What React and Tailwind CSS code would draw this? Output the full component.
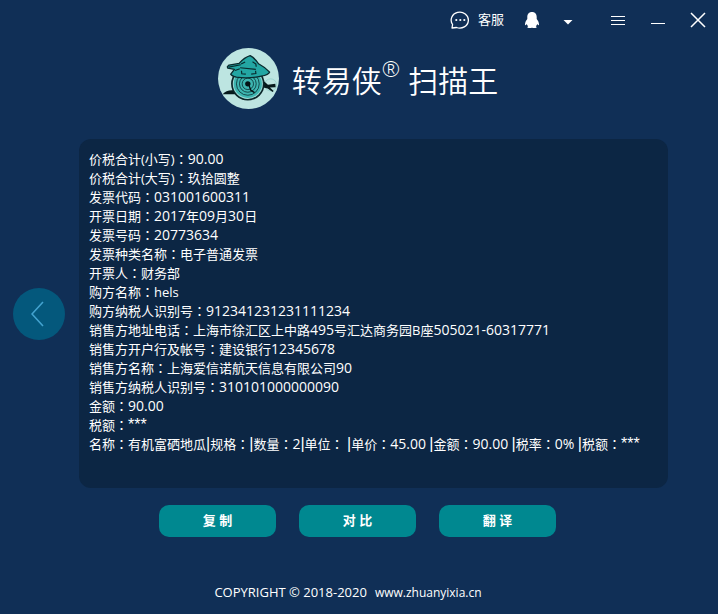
const receiptLines = [
  "价税合计(小写)：90.00",
  "价税合计(大写)：玖拾圆整",
  "发票代码：031001600311",
  "开票日期：2017年09月30日",
  "发票号码：20773634",
  "发票种类名称：电子普通发票",
  "开票人：财务部",
  "购方名称：hels",
  "购方纳税人识别号：912341231231111234",
  "销售方地址电话：上海市徐汇区上中路495号汇达商务园B座505021-60317771",
  "销售方开户行及帐号：建设银行12345678",
  "销售方名称：上海爱信诺航天信息有限公司90",
  "销售方纳税人识别号：310101000000090",
  "金额：90.00",
  "税额：***",
  "名称：有机富硒地瓜|规格：|数量：2|单位： |单价：45.00 |金额：90.00 |税率：0% |税额：***",
];

const actions = ["复 制", "对 比", "翻 译"];

// Digits are set a step larger, full-width colons use the centred form,
// bars and asterisks come from a narrower face
const ReceiptLine = ({ text }) => (
  <p>
    {text.split(/([0-9.%-]+|：|[|*]+)/).map((part, i) => {
      if (i % 2 === 0) return part;
      if (part === "：")
        return (
          <span key={i} className="leading-none font-['Noto_Sans_CJK_TC',sans-serif]">
            {part}
          </span>
        );
      if (/[|*]/.test(part))
        return (
          <span key={i} className="text-[16px] leading-none font-['Liberation_Sans',sans-serif]">
            {part}
          </span>
        );
      return (
        <span key={i} className="text-[14px] leading-none">
          {part}
        </span>
      );
    })}
  </p>
);

const Logo = () => (
  <svg viewBox="25 20 182 182" className="size-[61px]" aria-hidden="true">
    <circle cx="116" cy="111" r="91" fill="#bde5e1" />
    <circle cx="182" cy="130" r="18" fill="none" stroke="#8fcfc9" strokeWidth="2" />
    <path d="M39 158 Q50 144 72 146 L80 158 Z" fill="#071a1c" />
    <path d="M158 123 L164 121 L174 130 L196 127 L197 137 L180 138 L191 148 L188 151 L173 141 L157 137 Z" fill="#071a1c" />
    <circle cx="114" cy="127" r="50" fill="#0b2528" />
    <circle cx="114" cy="127" r="45" fill="#9bd8d3" />
    <circle cx="114" cy="127" r="42" fill="#3db5b0" />
    <g fill="none" stroke="#0c3437" strokeWidth="2.5">
      <circle cx="114" cy="127" r="34" />
      <circle cx="114" cy="127" r="25" />
      <circle cx="114" cy="127" r="17" />
    </g>
    <circle cx="114" cy="127" r="8" fill="#041214" />
    <path d="M117 130 L123 146 L134 153" fill="none" stroke="#041214" strokeWidth="4" />
    <path
      d="M53 76 L58 71 L88 66 Q104 48 121 43 Q135 50 146 67 Q165 77 179 92 Q176 100 154 104 Q116 112 80 107 Q66 104 63 98 L74 84 L54 80 Z"
      fill="#23a6a3"
      stroke="#092a2d"
      strokeWidth="4"
      strokeLinejoin="round"
    />
    <path
      d="M57 77 L93 70 M94 68 L106 62 M128 61 L138 68 L139 76 M91 79 L138 84 M95 88 L96 97 L108 98 M124 98 L138 96 L137 88 M76 87 L90 82"
      fill="none"
      stroke="#092a2d"
      strokeWidth="3.5"
    />
  </svg>
);

const App = () => {
  return (
    <div className="min-h-screen bg-[#102f56] text-white font-['Open_Sans','Noto_Sans_CJK_SC',sans-serif]">
      <header className="flex items-center justify-end h-10 pr-3">
        <button className="flex items-center gap-2 mr-5 text-[13px]">
          <svg viewBox="0 0 20 20" className="size-5" fill="none" stroke="currentColor" strokeWidth="1.3">
            <path d="M2 18 L2.6 14.5 A8.6 8 0 1 1 6.5 17.5 Z" strokeLinejoin="round" />
            <g fill="currentColor" stroke="none">
              <circle cx="6.3" cy="10" r="1.1" />
              <circle cx="10.3" cy="10" r="1.1" />
              <circle cx="14.3" cy="10" r="1.1" />
            </g>
          </svg>
          客服
        </button>
        <button aria-label="QQ" className="mr-[22px]">
          <svg viewBox="0 0 16 18" className="w-4 h-[18px]" fill="currentColor">
            <path d="M8 1 C4.8 1 3.3 3.2 3.3 6 V8 C2 9.6 1 11.5 1 13.5 C1 14.8 1.9 14.3 2.7 13 C3 14 3.5 14.8 4.2 15.3 C3 15.8 2.9 17 4.8 17 H7.3 L8 16.6 L8.7 17 H11.2 C13.1 17 13 15.8 11.8 15.3 C12.5 14.8 13 14 13.3 13 C14.1 14.3 15 14.8 15 13.5 C15 11.5 14 9.6 12.7 8 V6 C12.7 3.2 11.2 1 8 1 Z" />
          </svg>
        </button>
        <button aria-label="更多" className="mr-9">
          <svg viewBox="0 0 12 12" className="size-3" fill="currentColor">
            <path d="M1.5 6 H10.5 L6 10.5 Z" />
          </svg>
        </button>
        <div className="flex items-center gap-6">
          <button aria-label="菜单">
            <svg viewBox="0 0 16 16" className="size-4" stroke="currentColor">
              <path d="M1 4.5 H15 M1 8.5 H15 M1 12.5 H15" />
            </svg>
          </button>
          <button aria-label="最小化">
            <svg viewBox="0 0 16 16" className="size-4" stroke="currentColor">
              <path d="M1 11.5 H15" />
            </svg>
          </button>
          <button aria-label="关闭">
            <svg viewBox="0 0 16 16" className="size-4" stroke="currentColor" strokeWidth="1.5">
              <path d="M1 1 L15 15 M15 1 L1 15" />
            </svg>
          </button>
        </div>
      </header>

      <div className="flex items-center justify-center gap-[13px] mt-2 pr-[2px]">
        <Logo />
        <h1 className="flex items-center text-[30px] leading-[58px] font-[350] font-['Noto_Sans_CJK_SC',sans-serif]">
          转易侠
          <span className="self-start mr-2 text-[22px] leading-[36px] font-['Open_Sans',sans-serif]">
            ®
          </span>
          扫描王
        </h1>
      </div>

      <main className="flex items-center mt-[30px] pl-[13px] pr-[50px]">
        <button
          aria-label="返回"
          className="flex items-center justify-center shrink-0 size-[52px] mr-[14px] rounded-full bg-[#04587c]"
        >
          <svg viewBox="0 0 16 26" className="w-4 h-[26px]" fill="none" stroke="#43a3cf" strokeWidth="1.6">
            <path d="M12 1 L1 13 L12 25" />
          </svg>
        </button>
        <section className="flex-1 min-w-0 px-[10px] pt-[11px] pb-[34px] rounded-xl bg-[#0c2644] text-[13px] leading-[19px]">
          {receiptLines.map((line, i) => (
            <ReceiptLine key={i} text={line} />
          ))}
        </section>
      </main>

      <div className="flex justify-center gap-[23px] mt-[17px] pr-[3px]">
        {actions.map((label) => (
          <button
            key={label}
            className="w-[117px] h-8 rounded-[10px] bg-[#008890] text-[13px] font-bold"
          >
            {label}
          </button>
        ))}
      </div>

      <footer className="flex items-baseline justify-center gap-2 mt-[45px] pr-[22px] text-[12px] leading-5">
        <span className="text-[13px]">COPYRIGHT © 2018-2020</span>
        <a href="#">www.zhuanyixia.cn</a>
      </footer>
    </div>
  );
};

export default App;
